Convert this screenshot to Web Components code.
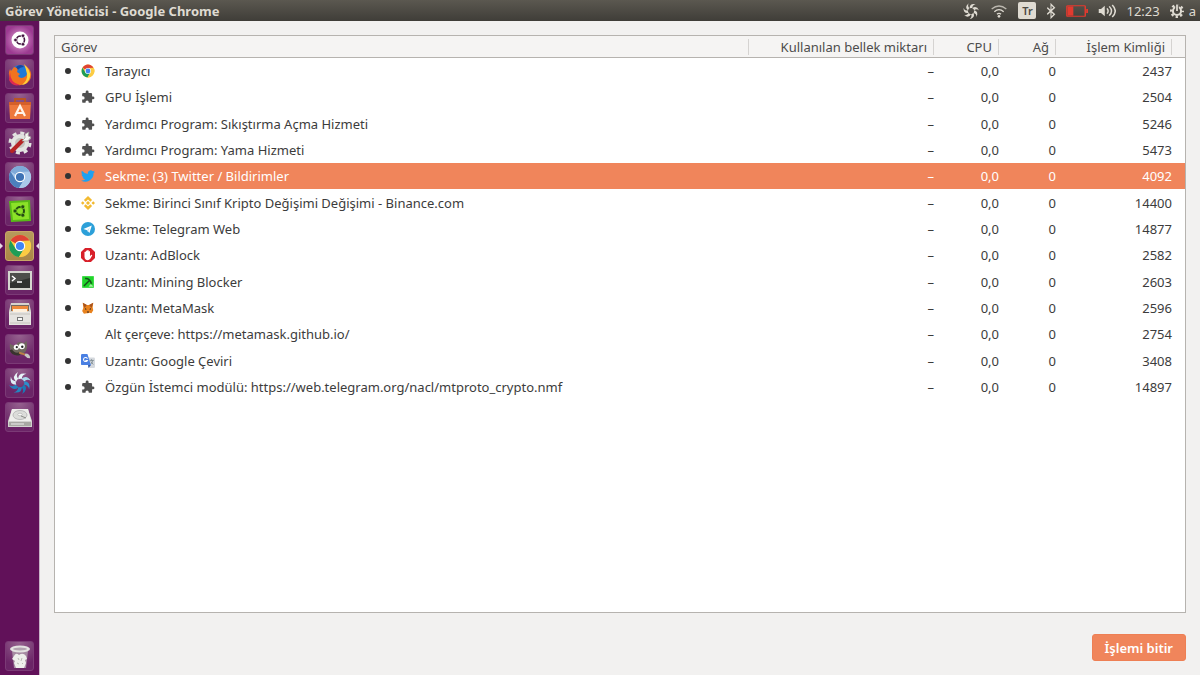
<!DOCTYPE html>
<html lang="tr">
<head>
<meta charset="utf-8">
<meta name="viewport" content="width=device-width, initial-scale=1">
<title>Görev Yöneticisi - Google Chrome</title>
<style>
    body {
        margin: 0;
        font: 13px/20px "Noto Sans", "Open Sans", sans-serif;
        color: #3c3c3c;
        background: #f2f1f0;
    }
</style>
</head>
<body>
<desktop-shell>
    <top-panel slot="panel" title="Görev Yöneticisi - Google Chrome"></top-panel>
    <app-launcher slot="launcher"></app-launcher>
    <task-manager></task-manager>
</desktop-shell>

<script>
const chromeWheel = (red, green, yellow, blue) => `
    <circle cx="12" cy="12" r="11" fill="${yellow}"/>
    <path d="M12 12 2.500 6.500A11 11 0 0 1 21.500 6.500L12 7z" fill="${red}"/>
    <path d="M2.500 6.500A11 11 0 0 0 11 23l5.300-8.500L12 12 7.500 14.500z" fill="${green}"/>
    <path d="M11 23 16.300 14.500A5 5 0 0 0 16 9L14 7h7.800A11 11 0 0 1 11 23z" fill="${yellow}"/>
    <circle cx="12" cy="12" r="5.200" fill="#fff"/>
    <circle cx="12" cy="12" r="4.100" fill="${blue}"/>`;

// One curved blade per colour, turned round the middle
const swirl = (colors) => colors.map((color, i) =>
    `<path d="M10 8Q10 0 19 2Q14 3 14 7.500Q12 7 10 8z" fill="${color}" transform="rotate(${i * 360 / colors.length} 12 12)"/>`).join("");

const ICONS = {
    chrome: chromeWheel("#df4335", "#1f9d57", "#fccc44", "#4285f4"),
    chromium: chromeWheel("#7ea9d8", "#4c7fbd", "#a9c8ea", "#3f73b5"),
    puzzle: `<path d="M20.500 11H19V7a2 2 0 0 0-2-2h-4V3.500a2.500 2.500 0 0 0-5 0V5H4a2 2 0 0 0-2 2v3.800h1.500a2.700 2.700 0 0 1 0 5.400H2V20a2 2 0 0 0 2 2h3.800v-1.500a2.700 2.700 0 0 1 5.400 0V22H17a2 2 0 0 0 2-2v-4h1.500a2.500 2.500 0 0 0 0-5z" fill="#505050"/>`,
    twitter: `<path d="M24 4.600a10 10 0 0 1-2.800.8 5 5 0 0 0 2.100-2.700 10 10 0 0 1-3.100 1.200 4.900 4.900 0 0 0-8.400 4.500A14 14 0 0 1 1.700 3.100a4.900 4.900 0 0 0 1.500 6.600 5 5 0 0 1-2.200-.6 4.900 4.900 0 0 0 3.900 4.900 5 5 0 0 1-2.200.1 4.900 4.900 0 0 0 4.600 3.400A10 10 0 0 1 0 19.500 14 14 0 0 0 21.500 7a10 10 0 0 0 2.500-2.400z" fill="#1da1f2"/>`,
    binance: `<path d="m12 0 7 7-3 3-4-4-4 4-3-3zM12 24l7-7-3-3-4 4-4-4-3 3zM0 12l3-3 3 3-3 3zM18 12l3-3 3 3-3 3zM12 8.500l3.500 3.500-3.500 3.500L8.500 12z" fill="#f3ba2f"/>`,
    telegram: `<circle cx="12" cy="12" r="12" fill="#2ca0d9"/><path d="m4 12.200 14.500-6.400-4 13.200-4-5z" fill="#fff"/><path d="m10.500 14 5-5-4 8z" fill="#b7ddf0"/>`,
    adblock: `<path d="M7 0h10l7 7v10l-7 7H7l-7-7V7z" fill="#d8202a"/><path d="M6 11V7q1-1.500 2.200 0v4-6q1.300-1.500 2.400 0v5-6q1.300-1.500 2.500 0v6-4q1.200-1.500 2.300 0v8l1.800-2q2-.8 2 1l-3 5q-3.300 4.500-7.800 2.200Q6 18.500 6 15z" fill="#fff"/>`,
    mining: `<rect x="2" y="2" width="20" height="20" fill="#20d62b"/><path d="m5 19 9-9M7 6q8-1 11 9" fill="none" stroke="#17501b" stroke-width="2.500"/><path d="m13 20 3-4 3 1 2 3z" fill="#a5ee9f"/>`,
    metamask: `<path d="m3 3 7 4h4l7-4-1 8 1 5-3 5-4-1-2 1h-2l-5 1-3-5 2-5z" fill="#e8821e"/><path d="m3 3 7 4-4 5zM21 3l-7 4 4 5z" fill="#a65320"/><path d="m7 12 3 2-3 1zM17 12l-3 2 3 1zM10 18h4l-1 2h-2z" fill="#3b2c25"/>`,
    translate: `<path d="M11 6h11q2 0 2 2v14q0 2-2 2h-9z" fill="#d5d9de"/><path d="M2 0h9l6 19H2q-2 0-2-2V2q0-2 2-2z" fill="#4a80e3"/><path d="M12 19h5l-4 5z" fill="#2d57a8"/><path d="M11 8A3.500 3.500 0 1 0 11 11H7.500" fill="none" stroke="#fff" stroke-width="1.800"/><path d="M15 11h7m-4-2v2m2 0q-1 5-3 6m0-4 4 5" fill="none" stroke="#718187" stroke-width="1.300"/>`,
    ubuntu: `<circle cx="12" cy="12" r="8.500" fill="#fff"/><circle cx="12.500" cy="12" r="4" fill="none" stroke="#43133f" stroke-width="1.600"/><g fill="#43133f" stroke="#fff" stroke-width=".7"><circle cx="7.500" cy="12" r="1.800"/><circle cx="15" cy="7.700" r="1.800"/><circle cx="15" cy="16.300" r="1.800"/></g>`,
    firefox: `<circle cx="12" cy="13" r="10" fill="#1d79d9"/><path d="M6 5Q9 6 12 5q-3 3-3 5l3 2-2 2q3 4 8 0 3-5-1-10 5 2 6 7 1 8-6 11-8 3-13-2-5-6-2-13l1 2z" fill="#f2731f"/><path d="M16 2q7 6 6 13-2 7-8 8 6-5 5-11-1-5-3-10z" fill="#ffcf3b"/><path d="M2 10q0 11 10 13-8 2-11-5z" fill="#de2950"/><path d="M8 5q5-4 8 0-4 0-6 3z" fill="#18469f"/>`,
    software: `<path d="M7 7V3h10v4" fill="none" stroke="#b75424" stroke-width="2"/><path d="M1 6h22l-1 17H2z" fill="#ee783c"/><path d="M1 6h22v3H1z" fill="#d45f29"/><path d="m7 20 5-10 5 10M8 17h8" fill="none" stroke="#fff3e8" stroke-width="2.200"/>`,
    settings: `<circle cx="12" cy="12" r="9" fill="#e3e4e1"/><circle cx="12" cy="12" r="10" fill="none" stroke="#e3e4e1" stroke-width="3" stroke-dasharray="4 3.850"/><circle cx="12" cy="12" r="5" fill="#c4c3bf"/><path d="m4 20 10-10" stroke="#b72525" stroke-width="4" stroke-linecap="round"/><path d="m14 10 3-3V3l4-2-1 4 3 1-3 4h-4z" fill="#f6f6f3" stroke="#9c9994" stroke-width=".7"/>`,
    updater: `<path d="m1 2 21-1 1 21-20 1z" fill="#59b918"/><path d="m3 4 17-1 1 17-16 1z" fill="#8be228"/><circle cx="12" cy="12" r="4" fill="none" stroke="#254d14" stroke-width="2"/><g fill="#254d14" stroke="#8be228" stroke-width=".7"><circle cx="7" cy="12" r="2"/><circle cx="14.800" cy="7.800" r="2"/><circle cx="14.800" cy="16.200" r="2"/></g>`,
    terminal: `<rect x="0" y="3" width="24" height="19" fill="#d5d5cf"/><rect x="2" y="5" width="20" height="15" fill="#30322f"/><path d="M2 5h20v5L2 15z" fill="#4c4e4a"/><path d="m4 8 3 2.500L4 13m5 1h5" fill="none" stroke="#fff" stroke-width="1.500"/>`,
    files: `<path d="M3 1h18l2 8v14H1V9z" fill="#d6d3cd"/><path d="M3 3h18v6H3z" fill="#74695e"/><path d="M4 4h16v5H4z" fill="#ee8a3c"/><path d="M5 7h14v3H5z" fill="#fff0dc"/><path d="M1 10h22v13H1z" fill="#e5e3df"/><path d="M2 12h20M2 21h20" stroke="#c6c3bd"/><rect x="9" y="15" width="6" height="4" fill="#777"/><rect x="10" y="16" width="4" height="2" fill="#f7f7f5"/>`,
    gimp: `<path d="M1 6q3 3 7 2 2-6 8-2l3-3q2 7-1 12-6 6-13 2-5-4-4-11z" fill="#70685f"/><path d="M2 13q3 6 10 4" fill="none" stroke="#38332e" stroke-width="3"/><circle cx="8" cy="10" r="2.800" fill="#fff"/><circle cx="14" cy="9" r="3.300" fill="#fff"/><circle cx="8.500" cy="10" r="1.200" fill="#222"/><circle cx="14.500" cy="9.500" r="1.300" fill="#222"/><path d="m11 16 9 3" stroke="#bd8146" stroke-width="2"/><path d="M18 17q5 0 5 5-4 0-6-3z" fill="#c6c7c3"/>`,
    shutter: swirl(["#e8f5fa", "#acd9ec", "#2d8fcb", "#197bb8", "#2485c0", "#2681bc", "#ddeef6", "#eaf5f8"]),
    swirl: swirl(Array(7).fill("#dfdbd2")),
    disk: `<path d="M4 4h16l4 12v6H0v-6z" fill="#d2d2cf"/><path d="M4 4h16l3 12H1z" fill="#efefec"/><ellipse cx="12" cy="10" rx="7" ry="4.500" fill="#dcddda" stroke="#bbb"/><ellipse cx="12" cy="9.500" rx="2.200" ry="1.300" fill="#f9f9f7" stroke="#aaa" stroke-width=".6"/><path d="m18 13-5-2" stroke="#8c8c88"/><path d="M1 17h22v4H1z" fill="#a8a8a3"/><path d="M3 19h13" stroke="#eee"/>`,
    trash: `<path d="M4 7h16l-2 17H6z" fill="#a68aa2"/><ellipse cx="12" cy="5" rx="10" ry="3.500" fill="#e4e2e1"/><ellipse cx="12" cy="5" rx="7" ry="1.500" fill="#b3a3b0"/><path d="M6 12q2-4 5-1 4-3 7 1l1 3-2 1 1 3-2 5H8l-2-5 1-2-3-2z" fill="#eeeeeb"/><path d="m10 14 1 2m3-2-1 3m-4 2 2 1m3 0 1-1" stroke="#babab5" fill="none"/>`,
    wifi: `<g fill="none" stroke="#dfdbd2" stroke-width="2"><path d="M1 9q11-9 22 0" opacity=".75"/><path d="M5 13q7-6 14 0M9 17q3-3 6 0"/></g><circle cx="12" cy="20" r="2" fill="#dfdbd2"/>`,
    bluetooth: `<path d="m3 7 17 10-8 5V2l8 5L3 17" fill="none" stroke="#dfdbd2" stroke-width="2.500"/>`,
    battery: `<rect x="1" y="4" width="20" height="16" rx="1" fill="none" stroke="#e33a2f" stroke-width="1.600"/><path d="M22 9h2v6h-2z" fill="#e33a2f"/><path d="M2 5h6v14H2z" fill="#e33a2f"/>`,
    volume: `<path d="M1 9h3l5-5v16l-5-5H1z" fill="#dfdbd2"/><g fill="none" stroke="#dfdbd2" stroke-width="2"><path d="M12 8q3 4 0 8M15 5q6 7 0 14M19 3q8 9 0 18"/></g>`,
    session: `<circle cx="12" cy="12" r="7" fill="none" stroke="#dfdbd2" stroke-width="3.500"/><circle cx="12" cy="12" r="10" fill="none" stroke="#dfdbd2" stroke-width="4" stroke-dasharray="4 3.850" stroke-dashoffset="2"/><path d="M9 0h6v12H9z" fill="#4b4943"/><path d="M12 1v11" stroke="#dfdbd2" stroke-width="3"/>`
};

class AppIcon extends HTMLElement {
    constructor() {
        super();
        this.attachShadow({ mode: "open" });
    }

    connectedCallback() {
        const name = this.getAttribute("name");
        const fit = this.hasAttribute("wide") ? "none" : "xMidYMid";
        this.shadowRoot.innerHTML = `
        <style>
            :host {
                display: inline-block;
                width: 14px;
                height: 14px;
            }

            svg {
                display: block;
                width: 100%;
                height: 100%;
            }
        </style>
        <svg viewBox="0 0 24 24" preserveAspectRatio="${fit}" aria-hidden="true">${ICONS[name] || ""}</svg>
        `;
    }
}

class DesktopShell extends HTMLElement {
    constructor() {
        super();
        this.attachShadow({ mode: "open" });

        this.shadowRoot.innerHTML = `
        <style>
            :host {
                display: grid;
                grid-template: auto 1fr / auto 1fr;
                min-height: 100vh;
            }

            header {
                grid-column: 1 / -1;
            }

            nav, main {
                display: flex;
            }

            main {
                min-width: 0;
            }
        </style>
        <header><slot name="panel"></slot></header>
        <nav><slot name="launcher"></slot></nav>
        <main><slot></slot></main>
        `;
    }
}

class TopPanel extends HTMLElement {
    constructor() {
        super();
        this.attachShadow({ mode: "open" });

        this.shadowRoot.innerHTML = `
        <style>
            :host {
                display: flex;
                align-items: center;
                justify-content: space-between;
                height: 21px;
                padding: 0 4px 0 5px;
                color: #dfdbd2;
                background: linear-gradient(#5b5850, #3f3d38);
            }

            h1 {
                margin: 0;
                font-size: 13px;
                font-weight: 700;
                line-height: 20px;
            }

            .status {
                display: flex;
                align-items: center;
                gap: 10px;
            }

            .status app-icon {
                width: 18px;
                height: 16px;
            }

            .status .narrow {
                width: 10px;
            }

            .status .battery {
                width: 22px;
            }

            .keyboard {
                width: 18px;
                border-radius: 2px;
                font-size: 11px;
                font-weight: 600;
                line-height: 17px;
                text-align: center;
                color: #4b4943;
                background: #dfdbd2;
            }

            .session {
                display: flex;
                align-items: center;
                gap: 5px;
            }

            .session app-icon {
                width: 14px;
            }
        </style>
        <h1></h1>
        <div class="status">
            <app-icon name="swirl"></app-icon>
            <app-icon name="wifi"></app-icon>
            <span class="keyboard">Tr</span>
            <app-icon class="narrow" name="bluetooth" wide></app-icon>
            <app-icon class="battery" name="battery" wide></app-icon>
            <app-icon name="volume" wide></app-icon>
            <time>12:23</time>
            <span class="session"><app-icon name="session"></app-icon>a</span>
        </div>
        `;
    }

    connectedCallback() {
        this.shadowRoot.querySelector("h1").textContent = this.getAttribute("title");
    }
}

class AppLauncher extends HTMLElement {
    constructor() {
        super();
        this.attachShadow({ mode: "open" });

        const apps = [
            ["ubuntu", "Ubuntu"],
            ["firefox", "Firefox"],
            ["software", "Ubuntu Yazılımları"],
            ["settings", "Sistem Ayarları"],
            ["chromium", "Chromium"],
            ["updater", "Yazılım Güncelleyici"],
            ["chrome", "Google Chrome"],
            ["terminal", "Uçbirim"],
            ["files", "Dosyalar"],
            ["gimp", "GIMP"],
            ["shutter", "Shutter"],
            ["disk", "Disk"],
            ["trash", "Çöp"]
        ];

        this.shadowRoot.innerHTML = `
        <style>
            :host {
                display: flex;
                box-sizing: border-box;
                width: 40px;
                padding: 4px 4px 4px 5px;
                border-right: 1px solid #c9b5c8;
                background: #611159;
            }

            ul {
                display: flex;
                flex: 1;
                flex-direction: column;
                gap: 4px;
                margin: 0;
                padding: 0;
                list-style: none;
            }

            li {
                position: relative;
                display: flex;
            }

            li:nth-child(3n) {
                margin-bottom: 1px;
            }

            li:last-child {
                margin-top: auto;
            }

            button {
                display: flex;
                align-items: center;
                justify-content: center;
                width: 29px;
                height: 30px;
                padding: 0;
                border: 1px solid #7b3a76;
                border-radius: 3px;
                background: radial-gradient(circle at 50% 0, #96628f, #6b2567 75%);
            }

            .ubuntu button {
                background: radial-gradient(circle, #e2a6d4, #9c3a91 75%);
            }

            .chrome button {
                border-color: #c9a767;
                background: linear-gradient(#b79a5c, #ab8746);
            }

            .chrome::before, .chrome::after {
                content: "";
                position: absolute;
                top: 12px;
                border: 3px solid transparent;
            }

            .chrome::before {
                left: -5px;
                border-left-color: #e6d9e4;
            }

            .chrome::after {
                right: -4px;
                border-right-color: #e6d9e4;
            }

            app-icon {
                width: 24px;
                height: 24px;
            }

            .shutter app-icon, .gimp app-icon {
                width: 22px;
            }
        </style>
        <ul>
            ${apps.map(([icon, label]) => `
            <li class="${icon}"><button type="button" aria-label="${label}"><app-icon name="${icon}"></app-icon></button></li>`).join("")}
        </ul>
        `;
    }
}

class TaskTable extends HTMLElement {
    constructor() {
        super();
        this.attachShadow({ mode: "open" });

        this.shadowRoot.innerHTML = `
        <style>
            :host {
                display: block;
                border: 1px solid #b6b3af;
                background: #fff;
            }

            table {
                width: 100%;
                table-layout: fixed;
                border-collapse: collapse;
            }

            .memory { width: 185px; }
            .cpu { width: 65px; }
            .network { width: 57px; }
            .pid { width: 116px; }
            .end { width: 13px; }

            th, td {
                padding: 0;
                text-align: right;
                white-space: nowrap;
            }

            thead {
                color: #4c4c4c;
                background: #f5f4f3;
            }

            th {
                height: 21px;
                border-bottom: 1px solid #b6b3af;
                font-weight: 400;
            }

            th span {
                display: block;
                padding: 0 6px;
                border-right: 1px solid #d5d3d1;
                line-height: 16px;
            }

            th:first-child, td:first-child {
                text-align: left;
            }

            td {
                height: 26px;
            }

            tr:nth-child(3n) td {
                height: 27px;
            }

            .task {
                display: flex;
                align-items: center;
            }

            .task::before {
                content: "";
                width: 6px;
                height: 6px;
                margin: 0 10px;
                border-radius: 50%;
                background: #333;
            }

            .task app-icon {
                margin-right: 10px;
            }

            .selected {
                color: #fff;
                background: #f0855b;
            }
        </style>
        <table>
            <colgroup>
                <col><col class="memory"><col class="cpu"><col class="network"><col class="pid"><col class="end">
            </colgroup>
            <thead>
                <tr>
                    <th><span>Görev</span></th>
                    <th><span>Kullanılan bellek miktarı</span></th>
                    <th><span>CPU</span></th>
                    <th><span>Ağ</span></th>
                    <th><span>İşlem Kimliği</span></th>
                    <th></th>
                </tr>
            </thead>
            <tbody></tbody>
        </table>
        `;
    }

    set tasks(list) {
        const body = this.shadowRoot.querySelector("tbody");
        body.innerHTML = list.map(([icon, name, pid]) => `
            <tr>
                <td><div class="task"><app-icon name="${icon}"></app-icon>${name}</div></td>
                <td>–</td>
                <td>0,0</td>
                <td>0</td>
                <td>${pid}</td>
                <td></td>
            </tr>`).join("");

        body.addEventListener("click", (event) => this.select(event.target.closest("tr")));
        this.select(body.rows[4]);
    }

    select(row) {
        for (const tr of row.parentNode.rows) {
            tr.classList.toggle("selected", tr === row);
        }
    }
}

class TaskManager extends HTMLElement {
    constructor() {
        super();
        this.attachShadow({ mode: "open" });

        this.shadowRoot.innerHTML = `
        <style>
            :host {
                display: flex;
                flex: 1;
                flex-direction: column;
                gap: 21px;
                min-width: 0;
                padding: 14px;
            }

            task-table {
                flex: 1;
            }

            button {
                align-self: flex-end;
                height: 27px;
                padding: 0 12px;
                border: 1px solid #ee7f54;
                border-radius: 3px;
                font: inherit;
                font-weight: 600;
                color: #fff;
                background: #f0855b;
            }
        </style>
        <task-table></task-table>
        <button type="button">İşlemi bitir</button>
        `;
    }

    connectedCallback() {
        this.shadowRoot.querySelector("task-table").tasks = [
            ["chrome", "Tarayıcı", 2437],
            ["puzzle", "GPU İşlemi", 2504],
            ["puzzle", "Yardımcı Program: Sıkıştırma Açma Hizmeti", 5246],
            ["puzzle", "Yardımcı Program: Yama Hizmeti", 5473],
            ["twitter", "Sekme: (3) Twitter / Bildirimler", 4092],
            ["binance", "Sekme: Birinci Sınıf Kripto Değişimi Değişimi - Binance.com", 14400],
            ["telegram", "Sekme: Telegram Web", 14877],
            ["adblock", "Uzantı: AdBlock", 2582],
            ["mining", "Uzantı: Mining Blocker", 2603],
            ["metamask", "Uzantı: MetaMask", 2596],
            ["blank", "Alt çerçeve: https://metamask.github.io/", 2754],
            ["translate", "Uzantı: Google Çeviri", 3408],
            ["puzzle", "Özgün İstemci modülü: https://web.telegram.org/nacl/mtproto_crypto.nmf", 14897]
        ];
    }
}

customElements.define("app-icon", AppIcon);
customElements.define("desktop-shell", DesktopShell);
customElements.define("top-panel", TopPanel);
customElements.define("app-launcher", AppLauncher);
customElements.define("task-table", TaskTable);
customElements.define("task-manager", TaskManager);
</script>
</body>
</html>
